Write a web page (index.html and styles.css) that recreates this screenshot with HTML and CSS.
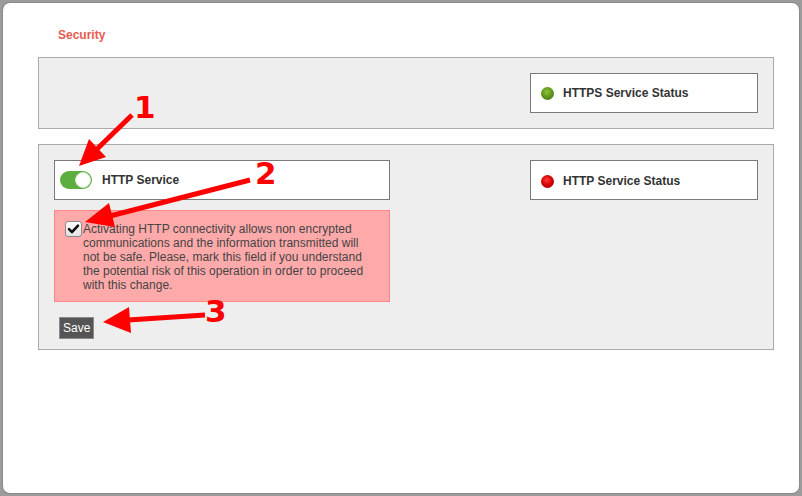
FILE: index.html
```html
<!DOCTYPE html>
<html lang="en">
<head>
<meta charset="utf-8">
<title>Security</title>
<link rel="stylesheet" href="styles.css">
</head>
<body>
<div class="window">
  <h2 class="title">Security</h2>
  <section class="panel panel-top">
    <div class="status-box"><span class="dot dot-green"></span><span>HTTPS Service Status</span></div>
  </section>
  <section class="panel panel-main">
    <div class="col">
      <div class="service-box">
        <span class="toggle"><span class="knob"></span></span>
        <span>HTTP Service</span>
      </div>
      <div class="warning">
        <span class="checkbox"><svg width="15" height="14" viewBox="0 0 15 14"><path d="M3 7.2 L6 10.2 L12 3.6" fill="none" stroke="#111" stroke-width="2.6" stroke-linecap="round" stroke-linejoin="round"/></svg></span>
        <p class="warning-text">Activating HTTP connectivity allows non encrypted communications and the information transmitted will not be safe. Please, mark this field if you understand the potential risk of this operation in order to proceed with this change.</p>
      </div>
      <button class="save">Save</button>
    </div>
    <div class="status-box status-low"><span class="dot dot-red"></span><span>HTTP Service Status</span></div>
  </section>
</div>
<svg class="annotations" width="802" height="496" viewBox="0 0 802 496">
  <g fill="#ff0000" stroke="none">
    <line x1="132" y1="115" x2="96" y2="150" stroke="#ff0000" stroke-width="5"/>
    <polygon points="79,166 106,157 89,139"/>
    <line x1="250" y1="180" x2="110" y2="216" stroke="#ff0000" stroke-width="5"/>
    <polygon points="85,222 115,227 109,203"/>
    <line x1="205" y1="315" x2="128" y2="320" stroke="#ff0000" stroke-width="5"/>
    <polygon points="103,322 131,333 129,307"/>
    <text x="134" y="118" class="num">1</text>
    <text x="255" y="184" class="num">2</text>
    <text x="205" y="322" class="num">3</text>
  </g>
</svg>
</body>
</html>
```

FILE: styles.css
```css
html, body {
  margin: 0;
  padding: 0;
}
body {
  width: 802px;
  height: 496px;
  background: #9b9b9b;
  font-family: "Liberation Sans", Arial, sans-serif;
  font-size: 12px;
  overflow: hidden;
  padding-top: 3px;
  padding-left: 3px;
  box-sizing: border-box;
}
.window {
  width: 796px;
  height: 490px;
  background: #ffffff;
  border-radius: 7px;
  box-shadow: 0 0 0 1px #8a8a8a;
  overflow: hidden;
}
.title {
  margin: 0;
  padding: 25px 0 0 55px;
  font-size: 12px;
  line-height: 14px;
  font-weight: bold;
  color: #e85a4f;
}
.panel {
  margin-left: 35px;
  width: 736px;
  box-sizing: border-box;
  border: 1px solid #aaaaaa;
  background: #eeeeee;
  display: flex;
  justify-content: space-between;
  align-items: flex-start;
}
.panel-top {
  margin-top: 15px;
  padding: 15px;
  justify-content: flex-end;
}
.panel-main {
  margin-top: 15px;
  padding: 15px 15px 10px 15px;
}
.col {
  display: flex;
  flex-direction: column;
  align-items: flex-start;
  width: 336px;
}
.status-box,
.service-box {
  height: 40px;
  box-sizing: border-box;
  border: 1px solid #7a7a7a;
  background: #ffffff;
  display: flex;
  align-items: center;
  font-weight: bold;
  color: #333333;
}
.status-box {
  width: 228px;
  padding-left: 10px;
  gap: 9px;
}
.status-low {
  padding-top: 2px;
}
.service-box {
  width: 336px;
  padding-left: 5px;
  gap: 10px;
}
.dot {
  width: 13px;
  height: 13px;
  border-radius: 50%;
  flex: none;
  margin-top: 1px;
}
.dot-green {
  background: radial-gradient(circle at 45% 38%, #8cc23c 0%, #5e931a 50%, #3f6a10 100%);
}
.dot-red {
  background: radial-gradient(circle at 45% 38%, #ff3a3a 0%, #d40000 50%, #860000 100%);
}
.toggle {
  width: 32px;
  height: 18px;
  border-radius: 9px;
  background: #5caf3e;
  position: relative;
  flex: none;
}
.knob {
  position: absolute;
  right: 1px;
  top: 1px;
  width: 14px;
  height: 14px;
  border-radius: 50%;
  background: #ffffff;
  border: 1px solid #d6e8c8;
}
.warning {
  margin-top: 10px;
  width: 336px;
  box-sizing: border-box;
  border: 1px solid #ff8585;
  background: #ffaaaa;
  padding: 11px 17px 9px 10px;
  display: flex;
  align-items: flex-start;
}
.checkbox {
  width: 17px;
  height: 16px;
  box-sizing: border-box;
  border: 1px solid #8a8a8a;
  border-radius: 3px;
  background: linear-gradient(#ffffff, #e2e2e2);
  margin-top: -1px;
  margin-right: 1px;
  flex: none;
  display: flex;
  align-items: center;
  justify-content: center;
}
.warning-text {
  margin: 0;
  font-size: 12px;
  line-height: 14px;
  color: #444444;
}
.save {
  margin: 15px 0 0 5px;
  height: 22px;
  padding: 0 3px;
  border: 1px solid #8a8a8a;
  background: #555555;
  color: #ffffff;
  font-family: "Liberation Sans", Arial, sans-serif;
  font-size: 12px;
  line-height: 20px;
}
.annotations {
  position: absolute;
  top: 0;
  left: 0;
  pointer-events: none;
}
.num {
  font-family: "DejaVu Sans", "Liberation Sans", sans-serif;
  font-weight: bold;
  font-size: 31px;
}
```
